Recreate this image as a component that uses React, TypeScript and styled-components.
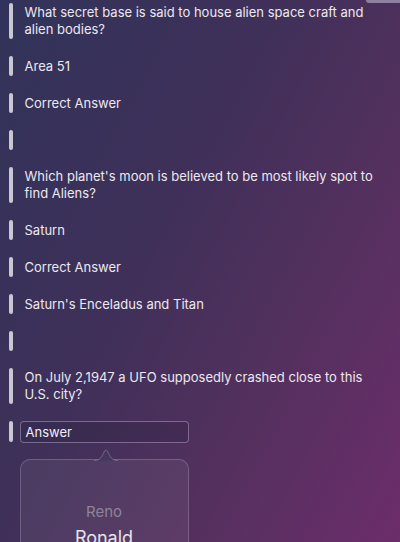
import React from "react";
import styled, { createGlobalStyle } from "styled-components";

const Global = createGlobalStyle`
  html, body { margin: 0; padding: 0; }
  body {
    width: 400px;
    height: 542px;
    overflow: hidden;
    font-family: Inter, "Liberation Sans", Arial, sans-serif;
  }
`;

const Page = styled.div`
  position: relative;
  width: 400px;
  height: 542px;
  overflow: hidden;
  background: linear-gradient(118deg, #31335a 0%, #3f3059 40%, #55305f 70%, #6c2d6a 100%);
  color: #ebe8f0;
`;

const TopTab = styled.div`
  position: absolute;
  top: 0;
  right: 0;
  width: 34px;
  height: 3px;
  background: #8e80a0;
  border-bottom-left-radius: 3px;
`;

const List = styled.div`
  display: flex;
  flex-direction: column;
  gap: 17px;
  padding: 3px 20px 0 9px;
`;

const Row = styled.div<{ $tall?: boolean }>`
  display: flex;
  align-items: stretch;
  gap: 7px;
  min-height: ${(p) => (p.$tall ? 36 : 20)}px;
`;

const Bar = styled.div<{ $fixed?: boolean }>`
  flex: 0 0 3.5px;
  width: 3.5px;
  border-radius: 2px;
  background: #c9c7d2;
  align-self: ${(p) => (p.$fixed ? "flex-start" : "stretch")};
  height: ${(p) => (p.$fixed ? "21px" : "auto")};
`;

const Text = styled.div`
  display: flex;
  align-items: center;
  padding-left: 5px;
  max-width: 352px;
  font-size: 13px;
  line-height: 17px;
  color: #ebe8f0;
`;

const Field = styled.div`
  position: relative;
  display: flex;
  flex-direction: column;
`;

const Input = styled.div`
  box-sizing: border-box;
  width: 169px;
  height: 22px;
  display: flex;
  align-items: center;
  padding: 0 5px;
  border: 1px solid rgba(200, 185, 215, 0.45);
  border-radius: 4px;
  background: rgba(30, 20, 45, 0.18);
  font-size: 13px;
  color: #f0eef4;
`;

const Popover = styled.div`
  position: relative;
  box-sizing: border-box;
  width: 169px;
  height: 130px;
  margin-top: 16px;
  border: 1px solid rgba(200, 185, 215, 0.28);
  border-radius: 10px;
  background: rgba(255, 255, 255, 0.06);
  display: flex;
  flex-direction: column;
  align-items: center;
  padding-top: 43px;
  gap: 6px;
`;

const Caret = styled.svg`
  position: absolute;
  top: -11px;
  left: 73px;
`;

const WheelItem = styled.div<{ $active?: boolean }>`
  font-size: ${(p) => (p.$active ? 18 : 15)}px;
  line-height: ${(p) => (p.$active ? 22 : 18)}px;
  color: ${(p) => (p.$active ? "#e6e2ea" : "#8e8399")};
`;

type Item = { text?: string; tall?: boolean };

const items: Item[] = [
  { text: "What secret base is said to house alien space craft and alien bodies?", tall: true },
  { text: "Area 51" },
  { text: "Correct Answer" },
  { text: "" },
  { text: "Which planet's moon is believed to be most likely spot to find Aliens?", tall: true },
  { text: "Saturn" },
  { text: "Correct Answer" },
  { text: "Saturn's Enceladus and Titan" },
  { text: "" },
  { text: "On July 2,1947 a UFO supposedly crashed close to this U.S. city?", tall: true },
];

export default function App() {
  return (
    <>
      <Global />
      <Page>
        <TopTab />
        <List>
          {items.map((it, i) => (
            <Row key={i} $tall={it.tall}>
              <Bar />
              <Text>{it.text}</Text>
            </Row>
          ))}
          <Row>
            <Bar $fixed />
            <Field>
              <Input>Answer</Input>
              <Popover>
                <Caret width="24" height="12" viewBox="0 0 24 12">
                  <path
                    d="M0 11.5 C6 11.5 8 8 10.5 2 Q12 -0.5 13.5 2 C16 8 18 11.5 24 11.5"
                    fill="#45375d"
                    stroke="rgba(200,185,215,0.35)"
                    strokeWidth="1"
                  />
                </Caret>
                <WheelItem>Reno</WheelItem>
                <WheelItem $active>Ronald</WheelItem>
              </Popover>
            </Field>
          </Row>
        </List>
      </Page>
    </>
  );
}
